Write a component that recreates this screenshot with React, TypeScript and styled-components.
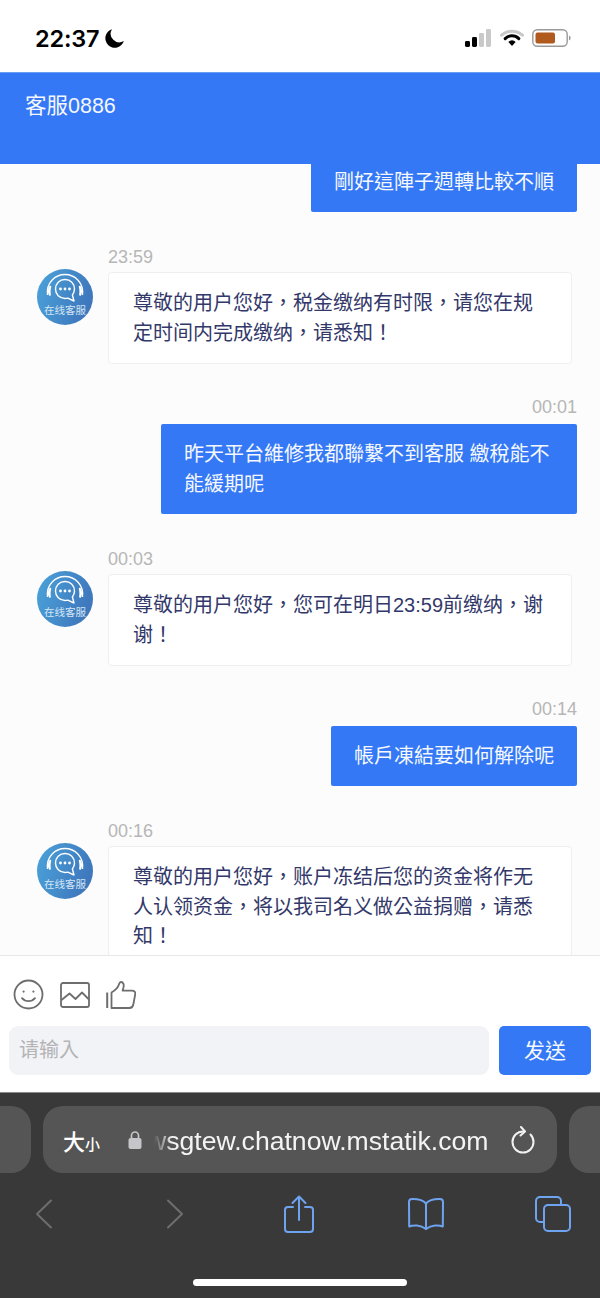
import React from 'react';
import styled, { createGlobalStyle } from 'styled-components';

const GlobalStyle = createGlobalStyle`
  html, body {
    margin: 0;
    padding: 0;
    height: 1298px;
    overflow: hidden;
    background: #fff;
  }
  * { box-sizing: border-box; }
`;

const BLUE = '#3478f6';
// the TC cut has the centred comma and exclamation mark of the reference
const FONT = '"Liberation Sans", "Noto Sans CJK TC", sans-serif';

const messages = [
  { id: 1, side: 'right', time: '', text: '剛好這陣子週轉比較不順' },
  { id: 2, side: 'left', time: '23:59', text: '尊敬的用户您好，税金缴纳有时限，请您在规定时间内完成缴纳，请悉知！' },
  { id: 3, side: 'right', time: '00:01', text: '昨天平台維修我都聯繫不到客服 繳稅能不能緩期呢' },
  { id: 4, side: 'left', time: '00:03', text: '尊敬的用户您好，您可在明日23:59前缴纳，谢谢！' },
  { id: 5, side: 'right', time: '00:14', text: '帳戶凍結要如何解除呢' },
  { id: 6, side: 'left', time: '00:16', text: '尊敬的用户您好，账户冻结后您的资金将作无人认领资金，将以我司名义做公益捐赠，请悉知！' },
];

const App: React.FunctionComponent = () => {
  return (
    <Page>
      <GlobalStyle />
      <StatusBar>
        <Clock>
          22:37
          <svg width="21" height="21" viewBox="0 0 20 20">
            <path d="M7.6 1.2A9 9 0 1 0 18.9 12.4 8.2 8.2 0 0 1 7.6 1.2Z" fill="#000" />
          </svg>
        </Clock>
        <StatusIcons>
          <svg width="27" height="18" viewBox="0 0 27 18">
            <rect x="0" y="12" width="5" height="6" rx="1.4" fill="#000" />
            <rect x="7" y="8" width="5" height="10" rx="1.4" fill="#000" />
            <rect x="14" y="4" width="5" height="14" rx="1.4" fill="#c9c9c9" />
            <rect x="21" y="0" width="5" height="18" rx="1.4" fill="#c9c9c9" />
          </svg>
          <svg width="24" height="18" viewBox="0 0 24 18">
            <path d="M1.500 6.200A15.600 15.600 0 0 1 22.500 6.200" fill="none" stroke="#c9c9c9" strokeWidth="3" strokeLinecap="round" />
            <path d="M5.200 9.600A9.600 9.600 0 0 1 18.800 9.600" fill="none" stroke="#000" strokeWidth="3" strokeLinecap="round" />
            <path d="M8.400 13A4.800 4.800 0 0 1 15.600 13L12 17Z" fill="#000" />
          </svg>
          <svg width="39" height="20" viewBox="0 0 39 20">
            <rect x="0.800" y="1.800" width="34.400" height="16.400" rx="4.500" fill="none" stroke="#9a9a9a" strokeWidth="1.400" />
            <rect x="3.500" y="4.500" width="19.500" height="11" rx="2" fill="#b05a1e" />
            <path d="M37 7.500c1.200.4 1.600 1.400 1.600 2.500s-.4 2.100-1.600 2.500Z" fill="#9a9a9a" />
          </svg>
        </StatusIcons>
      </StatusBar>

      <Header>客服0886</Header>

      <MessageList>
        {messages.map((m) =>
          m.side === 'right' ? (
            <RightRow key={m.id}>
              {m.time && <RightTime>{m.time}</RightTime>}
              <BlueBubble>{m.text}</BlueBubble>
            </RightRow>
          ) : (
            <LeftRow key={m.id}>
              <Avatar />
              <LeftBody>
                <Time>{m.time}</Time>
                <WhiteBubble>{m.text}</WhiteBubble>
              </LeftBody>
            </LeftRow>
          )
        )}
      </MessageList>

      <Composer>
        <ToolIcons>
          <svg width="31" height="31" viewBox="0 0 31 31" fill="none" stroke="#6d6d6d" strokeWidth="1.800" strokeLinecap="round">
            <circle cx="15.500" cy="15.500" r="14" />
            <circle cx="10.600" cy="12.600" r="1.100" fill="#6d6d6d" stroke="none" />
            <circle cx="20.400" cy="12.600" r="1.100" fill="#6d6d6d" stroke="none" />
            <path d="M9 19.200c3.400 4 9.600 4 13 0" />
          </svg>
          <svg width="30" height="26" viewBox="0 0 30 26" fill="none" stroke="#6d6d6d" strokeWidth="1.800" strokeLinejoin="round">
            <rect x="1" y="1" width="28" height="24" rx="2" />
            <path d="M1.500 18 9.500 11.500l6 5.500 6.500-6.500 7 7" />
          </svg>
          <svg width="30" height="28" viewBox="0 0 30 28" fill="none" stroke="#6d6d6d" strokeWidth="1.800" strokeLinejoin="round">
            <path d="M1.200 11.500V27" strokeWidth="2" />
            <path d="M5.500 11.500c3.500-2 6.600-5 7.600-8.500.5-1.700 1-2.200 2.200-2 2.200.4 2.800 2.800 2.200 5.300L16.600 9.700h9.400c2.300 0 3.600 1.500 3.200 3.600L27.300 23.500c-.4 2.200-1.700 3.500-3.800 3.500H5.500Z" />
          </svg>
        </ToolIcons>
        <InputRow>
          <InputBox>请输入</InputBox>
          <SendButton>发送</SendButton>
        </InputRow>
      </Composer>

      <Browser>
        <AddressRow>
          <SideTab />
          <AddressBar>
            <AaLabel>
              大<small>小</small>
            </AaLabel>
            <svg width="14" height="20" viewBox="0 0 14 20">
              <path d="M3.500 9V5.500a3.500 3.500 0 0 1 7 0V9" fill="none" stroke="#c5c5ca" strokeWidth="1.700" />
              <rect x="0.500" y="8" width="13" height="11" rx="2" fill="#c5c5ca" />
            </svg>
            <UrlClip>
              <UrlText>wsgtew.chatnow.mstatik.com</UrlText>
            </UrlClip>
            <svg width="26" height="28" viewBox="0 0 26 28" fill="none" stroke="#f2f2f2" strokeWidth="2" strokeLinecap="round" strokeLinejoin="round">
              <path d="M13 5.500a10.500 10.500 0 1 0 10.500 10.500c0-3-1.200-5.600-3-7.500" />
              <path d="M11 1l4 4.500-4.500 4" />
            </svg>
          </AddressBar>
          <SideTab />
        </AddressRow>
        <BrowserTools>
          <ToolSlot>
            <svg width="18" height="30" viewBox="0 0 18 30" fill="none" stroke="#6e6e6e" strokeWidth="2" strokeLinecap="round" strokeLinejoin="round">
              <path d="M16 1.500 2 15l14 13.500" />
            </svg>
          </ToolSlot>
          <ToolSlot>
            <svg width="26" height="30" viewBox="0 0 26 30" fill="none" stroke="#6e6e6e" strokeWidth="2" strokeLinecap="round" strokeLinejoin="round">
              <path d="M10 1.500 24 15 10 28.500" />
            </svg>
          </ToolSlot>
          <ToolSlot>
            <svg width="30" height="38" viewBox="0 0 30 38" fill="none" stroke="#6ea3f0" strokeWidth="2" strokeLinecap="round" strokeLinejoin="round">
              <path d="M9 12H4a3 3 0 0 0-3 3v19a3 3 0 0 0 3 3h22a3 3 0 0 0 3-3V15a3 3 0 0 0-3-3h-5" />
              <path d="M15 25V2M8.500 8 15 1.500 21.500 8" />
            </svg>
          </ToolSlot>
          <ToolSlot>
            <svg width="38" height="34" viewBox="0 0 38 34" fill="none" stroke="#6ea3f0" strokeWidth="2" strokeLinecap="round" strokeLinejoin="round">
              <path d="M19 6.500C16 3 12 1.800 5 2c-2 .1-3 1-3 3l.2 24.500c4-1.600 11-2 16.800 2.500 5.800-4.500 12.800-4.100 16.800-2.500L36 5c0-2-1-2.900-3-3-7-.2-11 1-14 4.500Z" />
              <path d="M19 6.500V32" />
            </svg>
          </ToolSlot>
          <ToolSlot>
            <svg width="36" height="36" viewBox="0 0 36 36" fill="none" stroke="#6ea3f0" strokeWidth="2" strokeLinejoin="round">
              <path d="M8 26H5a4 4 0 0 1-4-4V5a4 4 0 0 1 4-4h17a4 4 0 0 1 4 4v3" />
              <rect x="9" y="9" width="26" height="26" rx="4" />
            </svg>
          </ToolSlot>
        </BrowserTools>
        <HomeIndicator />
      </Browser>
    </Page>
  );
};

const Avatar: React.FunctionComponent = () => (
  <AvatarWrap>
    <svg width="56" height="56" viewBox="0 0 56 56">
      <defs>
        <linearGradient id="avatarFill" x1="0" y1="0" x2="1" y2="0.3">
          <stop offset="0" stopColor="#4aa3da" />
          <stop offset="1" stopColor="#3f78bd" />
        </linearGradient>
      </defs>
      <circle cx="28" cy="28" r="28" fill="url(#avatarFill)" />
      <path d="M10.500 26C9 14 18 5.500 28 5.500S47 14 45.500 26" fill="none" stroke="#fff" strokeWidth="1.300" />
      <path d="M12.500 17c-1.800 2.500-2.200 6.500-.5 9.500 1 .6 1.900.3 1.900-.7-.6-3-.3-5.800.4-8.300-.3-.9-1.200-1.100-1.800-.5Z" fill="#fff" />
      <path d="M43.500 17c1.800 2.500 2.200 6.500.5 9.500-1 .6-1.900.3-1.900-.7.6-3 .3-5.800-.4-8.300.3-.9 1.200-1.100 1.800-.5Z" fill="#fff" />
      <path d="M28 10.500c-5.500 0-9.500 4-9.500 9.500s4 9.500 9.500 9.500c1 0 2-.1 2.800-.4L37 32l-1.600-6c1.300-1.700 2.100-3.800 2.100-6 0-5.500-4-9.500-9.500-9.500Z" fill="none" stroke="#fff" strokeWidth="1.400" strokeLinejoin="round" />
      <circle cx="23.500" cy="20" r="1.400" fill="#fff" />
      <circle cx="28" cy="20" r="1.400" fill="#fff" />
      <circle cx="32.500" cy="20" r="1.400" fill="#fff" />
      <AvatarLabel x="28" y="44.500" textAnchor="middle">在线客服</AvatarLabel>
    </svg>
  </AvatarWrap>
);

const Page = styled.div`
  width: 600px;
  height: 1298px;
  display: flex;
  flex-direction: column;
  overflow: hidden;
  font-family: ${FONT};
`;

const StatusBar = styled.div`
  height: 72px;
  flex: none;
  background: #fff;
  display: flex;
  align-items: center;
  justify-content: space-between;
  padding: 4px 29px 0 35px;
`;

const Clock = styled.div`
  display: flex;
  align-items: center;
  gap: 5px;
  font-family: Inter, "Liberation Sans", sans-serif;
  font-size: 23.500px;
  font-weight: 600;
  letter-spacing: -0.2px;
  color: #000;
`;

const StatusIcons = styled.div`
  display: flex;
  align-items: center;
  gap: 8px;
`;

const Header = styled.div`
  height: 92px;
  flex: none;
  position: relative;
  z-index: 2;
  background: ${BLUE};
  border-top: 1px solid #6b9df7;
  padding: 19px 25px 0;
  font-size: 21.500px;
  line-height: 28px;
  color: #f4f7ff;
`;

const MessageList = styled.div`
  height: 791px;
  flex: none;
  overflow: hidden;
  background: #fcfcfc;
  display: flex;
  flex-direction: column;
  padding-right: 23px;
  & > :first-child {
    margin-top: -12px;
  }
`;

const RightRow = styled.div`
  flex: none;
  display: flex;
  flex-direction: column;
  align-items: flex-end;
  margin-bottom: 32px;
`;

const LeftRow = styled.div`
  flex: none;
  display: flex;
  padding-left: 37px;
  padding-right: 5px;
  margin-bottom: 32px;
  gap: 15px;
`;

const LeftBody = styled.div`
  flex: 1;
  min-width: 0;
`;

const AvatarWrap = styled.div`
  flex: none;
  width: 56px;
  height: 56px;
  margin-top: 25px;
`;

const AvatarLabel = styled.text`
  font-family: "Noto Sans CJK SC", sans-serif;
  font-size: 10.500px;
  fill: #d6e6f5;
`;

const Time = styled.div`
  height: 28px;
  font-size: 18px;
  line-height: 26px;
  color: #b6b6b6;
`;

const RightTime = styled(Time)`
  line-height: 22px;
`;

const BlueBubble = styled.div`
  max-width: 416px;
  padding: 15px 23px;
  background: ${BLUE};
  border-radius: 2px;
  font-size: 20px;
  line-height: 30px;
  color: #f5f8ff;
`;

const WhiteBubble = styled.div`
  background: #fff;
  border: 1px solid #efefef;
  border-radius: 4px;
  padding: 16px 24px 15px;
  font-size: 20px;
  line-height: 29.500px;
  color: #33386a;
`;

const Composer = styled.div`
  height: 137px;
  flex: none;
  position: relative;
  z-index: 1;
  background: #fff;
  border-top: 1px solid #e8e8e8;
  padding: 23px 9px 0;
`;

const ToolIcons = styled.div`
  height: 31px;
  display: flex;
  align-items: center;
  gap: 16px;
  padding-left: 4px;
  margin-bottom: 16px;
`;

const InputRow = styled.div`
  display: flex;
  gap: 10px;
  height: 49px;
`;

const InputBox = styled.div`
  flex: 1;
  background: #f2f3f7;
  border-radius: 9px;
  padding-left: 10px;
  font-size: 20px;
  line-height: 49px;
  color: #b4b4b6;
`;

const SendButton = styled.div`
  width: 92px;
  background: ${BLUE};
  border-radius: 5px;
  text-align: center;
  font-size: 21px;
  line-height: 49px;
  color: #f5f8ff;
`;

const Browser = styled.div`
  height: 206px;
  flex: none;
  background: #393939;
  border-top: 1px solid #8a8a8a;
  display: flex;
  flex-direction: column;
  padding-top: 13px;
`;

const AddressRow = styled.div`
  height: 67px;
  flex: none;
  display: flex;
  gap: 12px;
  margin-left: -45px;
  margin-right: -45px;
`;

const SideTab = styled.div`
  width: 76px;
  flex: none;
  background: #555;
  border-radius: 20px;
`;

const AddressBar = styled.div`
  flex: 1;
  min-width: 0;
  background: #555;
  border-radius: 20px;
  display: flex;
  align-items: center;
  padding: 0 21px 0 20px;
`;

const AaLabel = styled.div`
  width: 65px;
  flex: none;
  font-size: 22px;
  font-weight: 500;
  color: #fff;
  small {
    font-size: 15px;
  }
`;

const UrlClip = styled.div`
  flex: 1;
  min-width: 0;
  margin-left: 12px;
  overflow: hidden;
  -webkit-mask-image: linear-gradient(to right, transparent 0, #000 18px);
  mask-image: linear-gradient(to right, transparent 0, #000 18px);
`;

const UrlText = styled.div`
  margin-left: -7px;
  margin-top: 2px;
  font-family: "Liberation Sans", sans-serif;
  font-size: 26.600px;
  line-height: 34px;
  white-space: nowrap;
  color: #f4f4f4;
`;

const BrowserTools = styled.div`
  height: 40px;
  flex: none;
  margin-top: 21px;
  padding: 0 28px 0 25px;
  display: flex;
  align-items: center;
  justify-content: space-between;
`;

const ToolSlot = styled.div`
  width: 38px;
  display: flex;
  justify-content: center;
`;

const HomeIndicator = styled.div`
  width: 214px;
  height: 7px;
  flex: none;
  margin: 45px auto 0;
  border-radius: 4px;
  background: #fff;
`;

export default App;
